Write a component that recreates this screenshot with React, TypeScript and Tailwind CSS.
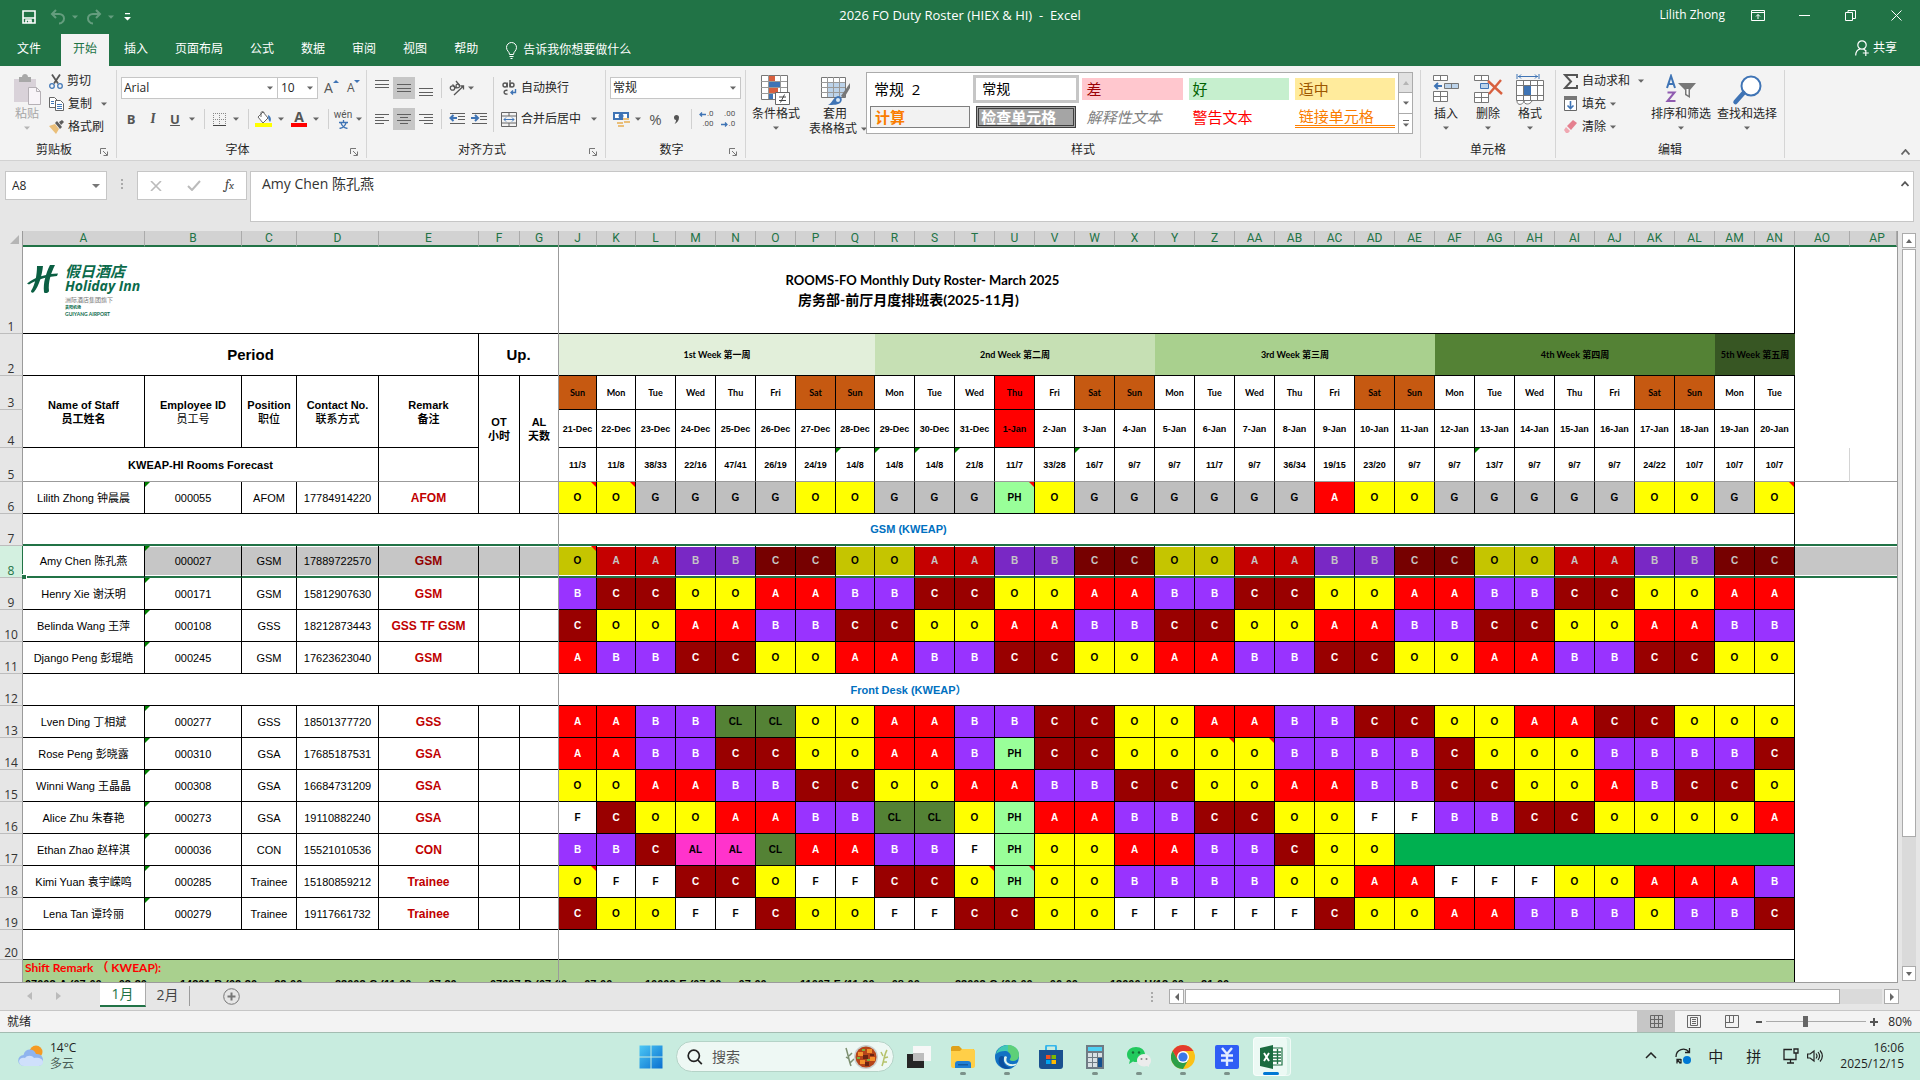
import type { ReactNode } from 'react'

type Staff = {
  row: number
  name: string
  id: string
  position: string
  phone: string
  remark: string
  shifts: string
  notes?: number[]
}

const menuTabs = ['文件', '开始', '插入', '页面布局', '公式', '数据', '审阅', '视图', '帮助']

const leftCols = ['A', 'B', 'C', 'D', 'E', 'F', 'G']
const dayCols = [
  'J', 'K', 'L', 'M', 'N', 'O', 'P', 'Q', 'R', 'S', 'T', 'U', 'V', 'W', 'X', 'Y', 'Z',
  'AA', 'AB', 'AC', 'AD', 'AE', 'AF', 'AG', 'AH', 'AI', 'AJ', 'AK', 'AL', 'AM', 'AN',
]

const weekdays = ['Sun', 'Mon', 'Tue', 'Wed', 'Thu', 'Fri', 'Sat']
const days = dayCols.map((col, i) => ({
  col,
  weekday: weekdays[i % 7],
  date: i < 11 ? `${21 + i}-Dec` : `${i - 10}-Jan`,
  holiday: i === 11,
}))

const forecast = (
  '11/3 11/8 38/33 22/16 47/41 26/19 24/19 14/8 14/8 14/8 21/8 11/7 33/28 16/7 9/7 ' +
  '9/7 11/7 9/7 36/34 19/15 23/20 9/7 9/7 13/7 9/7 9/7 9/7 24/22 10/7 10/7 10/7'
).split(' ')
const forecastFlags = [7, 8, 9, 10, 13, 23]

const weeks = [
  { label: '1st Week 第一周', span: 8, color: 'bg-[#e2efda]' },
  { label: '2nd Week 第二周', span: 7, color: 'bg-[#c6e0b4]' },
  { label: '3rd Week 第三周', span: 7, color: 'bg-[#a9d08e]' },
  { label: '4th Week 第四周', span: 7, color: 'bg-[#548235]' },
  { label: '5th Week 第五周', span: 2, color: 'bg-[#375623]' },
]

const manager: Staff[] = [
  { row: 6, name: 'Lilith Zhong 钟晨晨', id: '000055', position: 'AFOM', phone: '17784914220', remark: 'AFOM', shifts: 'O O G G G G O O G G G PH O G G G G G G A O O G G G G G O O G O', notes: [0, 1, 11, 30] },
]

const gsm: Staff[] = [
  { row: 8, name: 'Amy Chen 陈孔燕', id: '000027', position: 'GSM', phone: '17889722570', remark: 'GSM', shifts: 'O A A B B C C O O A A B B C C O O A A B B C C O O A A B B C C', notes: [0] },
  { row: 9, name: 'Henry Xie 谢沃明', id: '000171', position: 'GSM', phone: '15812907630', remark: 'GSM', shifts: 'B C C O O A A B B C C O O A A B B C C O O A A B B C C O O A A' },
  { row: 10, name: 'Belinda Wang 王萍', id: '000108', position: 'GSS', phone: '18212873443', remark: 'GSS TF GSM', shifts: 'C O O A A B B C C O O A A B B C C O O A A B B C C O O A A B B' },
  { row: 11, name: 'Django Peng 彭琨皓', id: '000245', position: 'GSM', phone: '17623623040', remark: 'GSM', shifts: 'A B B C C O O A A B B C C O O A A B B C C O O A A B B C C O O' },
]

const frontDesk: Staff[] = [
  { row: 13, name: 'Lven Ding 丁相斌', id: '000277', position: 'GSS', phone: '18501377720', remark: 'GSS', shifts: 'A A B B CL CL O O A A B B C C O O A A B B C C O O A A C C O O O' },
  { row: 14, name: 'Rose Peng 彭晓露', id: '000310', position: 'GSA', phone: '17685187531', remark: 'GSA', shifts: 'A A B B C C O O A A B PH C C O O O O B B B B C O O O B B B B C', notes: [16, 17] },
  { row: 15, name: 'Winni Wang 王晶晶', id: '000308', position: 'GSA', phone: '16684731209', remark: 'GSA', shifts: 'O O A A B B C C O O A A B B C C O O A A B B C C O O A B C C O' },
  { row: 16, name: 'Alice Zhu 朱春艳', id: '000273', position: 'GSA', phone: '19110882240', remark: 'GSA', shifts: 'F C O O A A B B CL CL O PH A A B B C C O O F F B B C C O O O O A' },
  { row: 17, name: 'Ethan Zhao 赵梓淇', id: '000036', position: 'CON', phone: '15521010536', remark: 'CON', shifts: 'B B C AL AL CL A A B B F PH O O A A B B C O O' },
  { row: 18, name: 'Kimi Yuan 袁宇嵘鸣', id: '000285', position: 'Trainee', phone: '15180859212', remark: 'Trainee', shifts: 'O F F C C O F F C C O PH O O B B B B O O A A F F F O O A A A B', notes: [0, 10, 11] },
  { row: 19, name: 'Lena Tan 谭玲丽', id: '000279', position: 'Trainee', phone: '19117661732', remark: 'Trainee', shifts: 'C O O F F C O O F F C C O O F F F F F C O O A A B B B O B B C' },
]

const shiftCodes = [
  '07003-A (07:00 — 03:30 、', '14301-B (02:30 — 22:00 、', '23003-C (11:00 — 07:30 、', '07007-D (07:00 — 07:00 、',
  '10003-E (07:00 — 07:00 、', '11007-F (11:00 — 08:00 、', '23003-G (00:00 — 06:00 、', '13000-H(13:00 — 21:00 、',
]

const shiftStyle: Record<string, string> = {
  O: 'bg-[#ffff00] text-black',
  A: 'bg-[#ff0000] text-white',
  B: 'bg-[#9933ff] text-white',
  C: 'bg-[#990000] text-white',
  G: 'bg-[#bfbfbf] text-black',
  F: 'bg-white text-black',
  PH: 'bg-[#99ff99] text-black',
  CL: 'bg-[#548235] text-black',
  AL: 'bg-[#ff33cc] text-black',
}

const selectedStyle: Record<string, string> = {
  O: 'bg-[#c5c500] text-black',
  A: 'bg-[#c50000] text-[#c5c5c5]',
  B: 'bg-[#7928c5] text-[#c5c5c5]',
  C: 'bg-[#760000] text-[#c5c5c5]',
}

/* ---------- small drawing helpers ---------- */

function Caret({ className = 'text-[#666666]' }: { className?: string }) {
  return (
    <svg className={`h-[4px] w-[6px] shrink-0 ${className}`} viewBox="0 0 6 4" fill="currentColor">
      <path d="M0 .5h6L3 3.7z" />
    </svg>
  )
}

function Launcher() {
  return (
    <svg className="h-2 w-2" viewBox="0 0 8 8" fill="none" stroke="#777">
      <path d="M.5 6V.5H6M3 3l4 4M7.5 3.5v4h-4" />
    </svg>
  )
}

function Lines({ rows, className = '' }: { rows: [number, number, number][]; className?: string }) {
  return (
    <svg className={`h-4 w-4 ${className}`} viewBox="0 0 16 16" stroke="#5f5f5f">
      {rows.map(([x1, x2, y]) => (
        <path key={y} d={`M${x1} ${y}.5H${x2}`} />
      ))}
    </svg>
  )
}

function Divider() {
  return <div className="h-5 w-px bg-[#d0d0d0]" />
}

function Group({ label, width, launcher, children }: { label: string; width: string; launcher?: boolean; children: ReactNode }) {
  return (
    <section className={`flex h-[88px] shrink-0 flex-col border-r border-[#d5d5d5] ${width}`}>
      <div className="h-[72px]">{children}</div>
      <div className="flex h-4 items-center px-2">
        <span className="flex-1 text-center">{label}</span>
        {launcher && (
          <button aria-label={`${label}设置`} className="self-end pb-[2px]">
            <Launcher />
          </button>
        )}
      </div>
    </section>
  )
}

function BigButton({ label, width, children }: { label: string; width: string; children: ReactNode }) {
  return (
    <button className={`flex flex-col items-center pt-1 ${width}`}>
      <span className="h-8">{children}</span>
      <span className="h-4 whitespace-nowrap leading-4">{label}</span>
      <span className="flex h-3 items-center">
        <Caret />
      </span>
    </button>
  )
}

function Corner({ kind }: { kind: 'error' | 'note' }) {
  return kind === 'error' ? (
    <i className="absolute left-0 top-0 h-0 w-0 border-r-[5px] border-t-[5px] border-r-transparent border-t-[#008000]" />
  ) : (
    <i className="absolute right-0 top-0 h-0 w-0 border-l-[5px] border-t-[5px] border-l-transparent border-t-[#ff0000]" />
  )
}

/* ---------- title bar and menu ---------- */

function TitleBar() {
  return (
    <header className="shrink-0 bg-[#217346] text-white">
      <div className="grid h-[34px] grid-cols-[1fr_auto_1fr] items-center">
        <div className="flex items-center pl-[22px]">
          <button aria-label="保存">
            <svg className="h-[14px] w-[14px]" viewBox="0 0 14 14" fill="none" stroke="white" strokeWidth="1.6">
              <path d="M1 1h12v12H1zM1 8h12M4 13v-3h5v3M7 10v3" />
            </svg>
          </button>
          <button aria-label="撤消" className="ml-[14px] flex items-center gap-[6px] opacity-30">
            <svg className="h-4 w-4" viewBox="0 0 16 16" fill="none" stroke="white" strokeWidth="2">
              <path d="M6 1 2 5l4 4M2 5h7c3 0 5 2 5 4.500s-2 5-5 5" />
            </svg>
            <Caret className="text-white" />
          </button>
          <button aria-label="恢复" className="ml-[8px] flex items-center gap-[6px] opacity-30">
            <svg className="h-4 w-4" viewBox="0 0 16 16" fill="none" stroke="white" strokeWidth="2">
              <path d="m10 1 4 4-4 4M14 5H7c-3 0-5 2-5 4.500s2 5 5 5" />
            </svg>
            <Caret className="text-white" />
          </button>
          <button aria-label="自定义快速访问工具栏" className="ml-[10px]">
            <svg className="h-2 w-[7px]" viewBox="0 0 7 8" fill="white">
              <path d="M1 0h5v1.200H1zM0 4h7L3.500 7.500z" />
            </svg>
          </button>
        </div>
        <h1 className="whitespace-pre pb-1 text-[13px]">2026 FO Duty Roster (HIEX &amp; HI)  -  Excel</h1>
        <div className="flex items-center justify-end pb-1 pr-[18px]">
          <span className="mr-[26px]">Lilith Zhong</span>
          <button aria-label="功能区显示选项" className="mr-[34px]">
            <svg className="h-3 w-[14px]" viewBox="0 0 14 12" fill="none" stroke="white">
              <path d="M.5 1.500h13v10H.5zM.5 3.500h13M7 10V5.500M5 7.500l2-2 2 2" />
            </svg>
          </button>
          <button aria-label="最小化" className="mr-[35px]">
            <svg className="h-[11px] w-[11px]" viewBox="0 0 11 11" stroke="white">
              <path d="M0 5.500h11" />
            </svg>
          </button>
          <button aria-label="还原" className="mr-[35px]">
            <svg className="h-[11px] w-[11px]" viewBox="0 0 11 11" fill="none" stroke="white">
              <path d="M.5 2.500h7v8h-7zM3 2.500V.5h7.500v8h-3" />
            </svg>
          </button>
          <button aria-label="关闭">
            <svg className="h-[11px] w-[11px]" viewBox="0 0 11 11" stroke="white">
              <path d="m.5.5 10 10M10.500.5l-10 10" />
            </svg>
          </button>
        </div>
      </div>

      <div className="flex h-8 items-stretch">
        <nav className="flex gap-[3px] pl-[5px]">
          {menuTabs.map((tab, i) => (
            <button
              key={tab}
              className={`px-3 pb-[2px] ${i === 0 ? 'mr-[5px]' : ''} ${i === 1 ? 'bg-[#f3f3f3] text-[#217346]' : ''}`}
            >
              {tab}
            </button>
          ))}
        </nav>
        <button className="ml-[16px] flex items-center gap-[6px]">
          <svg className="h-[17px] w-[11px]" viewBox="0 0 11 17" fill="none" stroke="white">
            <path d="M3.500 12.500c0-3-3-3.500-3-7a5 5 0 0 1 10 0c0 3.500-3 4-3 7zM3.500 14.500h4M4.500 16.500h2" />
          </svg>
          告诉我你想要做什么
        </button>
        <button className="ml-auto mr-[23px] flex items-center gap-1 pb-[4px]">
          <svg className="h-4 w-[14px]" viewBox="0 0 14 16" fill="none" stroke="white" strokeWidth="1.200">
            <circle cx="7" cy="5" r="4.200" />
            <path d="M.7 15.500c0-4 2-6 4.500-6.500M8.500 9l2 1.500M10.800 10v6M7.800 13h6" />
          </svg>
          共享
        </button>
      </div>
    </header>
  )
}

/* ---------- ribbon ---------- */

function ClipboardGroup() {
  return (
    <Group label="剪贴板" width="w-[117px]" launcher>
      <div className="flex">
        <button className="ml-[9px] flex w-9 flex-col items-center pt-1 text-[#a6a6a6]">
          <svg className="h-8 w-8" viewBox="0 0 32 32">
            <path d="M3 5h22v23H3z" fill="#d9d2d9" />
            <path d="M8 8V3h3c0-4 6-4 6 0h3v5z" fill="#a8a8a8" />
            <path d="M17.500 13.500h8l4 4v13h-12z" fill="#f8f4f8" stroke="#b5b0b5" />
            <path d="M25.500 13.500v4h4" fill="none" stroke="#b5b0b5" />
          </svg>
          <span className="leading-4">粘贴</span>
          <span className="flex h-3 items-center">
            <Caret className="text-[#b5b5b5]" />
          </span>
        </button>
        <div className="flex flex-col pl-[4px]">
          <button className="flex h-[22px] items-center gap-[4px]">
            <svg className="h-[15px] w-[14px]" viewBox="0 0 14 15" fill="none">
              <path d="m3 .5 6 9M11 .5l-6 9" stroke="#555" strokeWidth="1.800" />
              <circle cx="3" cy="12" r="2.300" stroke="#4379b8" strokeWidth="1.300" />
              <circle cx="11" cy="12" r="2.300" stroke="#4379b8" strokeWidth="1.300" />
            </svg>
            剪切
          </button>
          <button className="flex h-[23px] items-center gap-[4px]">
            <svg className="h-[14px] w-[15px]" viewBox="0 0 15 14" fill="white" stroke="#666">
              <path d="M.5.5h5l3 3v7h-8z" />
              <path d="M6.500 3.500h5l3 3v7h-8z" />
              <path d="M2 4.500h3M2 6.500h3M8 7.500h5M8 9.500h5M8 11.500h5" stroke="#4379b8" />
            </svg>
            复制
            <span className="ml-[5px]">
              <Caret />
            </span>
          </button>
          <button className="flex h-[23px] items-center gap-[4px]">
            <svg className="h-[14px] w-[15px]" viewBox="0 0 15 14">
              <path d="m0 6 6-2 4 5-3 5z" fill="#eabf7a" />
              <path d="m6 3 2-2 5 6-2 2zM10 2l3-2 2 2-3 3z" fill="#5d5d5d" />
            </svg>
            格式刷
          </button>
        </div>
      </div>
    </Group>
  )
}

function FontGroup() {
  return (
    <Group label="字体" width="w-[250px]" launcher>
      <div className="flex items-center pl-[4px] pt-[7px]">
        <label className="flex h-[22px] w-[157px] items-center border border-[#c6c6c6] bg-white pr-1">
          <select aria-label="字体" className="h-full flex-1 appearance-none pl-[2px] outline-none">
            <option>Arial</option>
          </select>
          <Caret />
        </label>
        <label className="flex h-[22px] w-[40px] items-center border border-l-0 border-[#c6c6c6] bg-white pr-1">
          <select aria-label="字号" className="h-full w-5 flex-1 appearance-none pl-[3px] outline-none">
            <option>10</option>
          </select>
          <Caret />
        </label>
        <button aria-label="增大字号" className="relative ml-[6px] h-5 w-[15px] text-left text-[14px] leading-5 text-[#555555]">
          A<i className="absolute right-0 top-[2px] border-x-[3px] border-b-[3px] border-x-transparent border-b-[#3f74b5]" />
        </button>
        <button aria-label="减小字号" className="relative ml-[8px] h-5 w-[13px] text-left text-[12px] leading-5 text-[#555555]">
          A<i className="absolute right-0 top-[2px] border-x-[3px] border-t-[3px] border-x-transparent border-t-[#3f74b5]" />
        </button>
      </div>
      <div className="flex h-10 items-center pl-[8px] text-[#555555]">
        <button className="w-[12px] text-[13px] font-bold">B</button>
        <button className="ml-[10px] w-[12px] font-serif text-[14px] font-bold italic">I</button>
        <button className="ml-[10px] w-[12px] text-[13px] font-bold underline">U</button>
        <span className="ml-[8px] mr-[9px]"><Caret /></span>
        <Divider />
        <button aria-label="边框" className="ml-[8px] mr-[7px]">
          <svg className="h-[13px] w-[13px]" viewBox="0 0 13 13" fill="none" stroke="#888" strokeDasharray="1 1">
            <path d="M0 .5h13M0 6.500h13M.5 0v12M6.500 0v12M12.500 0v12" />
            <path d="M0 12.500h13" stroke="#444" strokeDasharray="none" />
          </svg>
        </button>
        <Caret />
        <span className="w-[9px]" />
        <Divider />
        <button aria-label="填充颜色" className="ml-[6px] mr-[6px]">
          <svg className="h-4 w-[17px]" viewBox="0 0 17 16">
            <path d="m3 6 5-5 5 6-5 5z" fill="#fff" stroke="#666" />
            <path d="M6 6V2c0-2 3-2 3 0" fill="none" stroke="#666" />
            <path d="M13 4c4 2 3 6 2 7-1-1-2-3-2-7" fill="#4379b8" />
            <path d="M0 12h17v4H0z" fill="#ffff00" />
          </svg>
        </button>
        <Caret />
        <button aria-label="字体颜色" className="ml-[7px] mr-[6px] flex h-4 w-4 flex-col items-center justify-between">
          <span className="text-[14px] font-bold leading-[12px]">A</span>
          <span className="h-1 w-4 shrink-0 bg-[#ff0000]" />
        </button>
        <Caret />
        <span className="w-[9px]" />
        <Divider />
        <button aria-label="拼音" className="ml-[6px] mr-[5px] flex w-4 flex-col items-center font-['Roboto','Noto_Sans_CJK_SC',sans-serif] text-[10px] leading-[11px]">
          <span>wén</span>
          <svg className="h-[9px] w-[9px]" viewBox="0 0 9 9" fill="none" stroke="#3f74b5" strokeWidth="1.300">
            <path d="M4.500 0v2M0 2.500h9M2 3c1 3 3 5 6.500 5.500M7 3c-1 3-3 5-6.500 5.500" />
          </svg>
        </button>
        <Caret />
      </div>
    </Group>
  )
}

function AlignGroup() {
  return (
    <Group label="对齐方式" width="w-[239px]" launcher>
      <div className="flex">
        <div className="pl-[4px] pt-[7px]">
          <div className="flex h-[22px] items-center">
            <button aria-label="顶端对齐" className="flex h-[22px] w-[22px] items-center justify-center"><Lines rows={[[1, 15, 0], [1, 15, 4], [1, 15, 7]]} /></button>
            <button aria-label="垂直居中" className="flex h-[22px] w-[22px] items-center justify-center bg-[#c6c6c6]"><Lines rows={[[1, 15, 4], [1, 15, 8], [1, 15, 11]]} /></button>
            <button aria-label="底端对齐" className="flex h-[22px] w-[22px] items-center justify-center"><Lines rows={[[1, 15, 8], [1, 15, 12], [1, 15, 15]]} /></button>
            <span className="mx-[4px]"><Divider /></span>
            <button aria-label="方向" className="mx-[3px]">
              <svg className="h-4 w-4" viewBox="0 0 16 16" fill="none" stroke="#555" strokeWidth="1.300">
                <circle cx="3.500" cy="8" r="2.200" />
                <path d="m3.500 4.500 4 4M7 1l4 5" />
                <circle cx="8.800" cy="6" r="1.800" />
                <path d="M5 15 14.500 6M11.500 6h3v3.500" />
              </svg>
            </button>
            <Caret />
          </div>
          <div className="mt-[9px] flex h-[22px] items-center">
            <button aria-label="左对齐" className="flex h-[22px] w-[22px] items-center justify-center"><Lines rows={[[1, 15, 3], [1, 10, 6], [1, 15, 9], [1, 10, 12]]} /></button>
            <button aria-label="居中" className="flex h-[22px] w-[22px] items-center justify-center bg-[#c6c6c6]"><Lines rows={[[1, 15, 3], [4, 12, 6], [1, 15, 9], [4, 12, 12]]} /></button>
            <button aria-label="右对齐" className="flex h-[22px] w-[22px] items-center justify-center"><Lines rows={[[1, 15, 3], [6, 15, 6], [1, 15, 9], [6, 15, 12]]} /></button>
            <span className="mx-[4px]"><Divider /></span>
            <button aria-label="减少缩进量" className="ml-[3px]">
              <svg className="h-4 w-4" viewBox="0 0 16 16" stroke="#5f5f5f" fill="none">
                <path d="M1 2.500h15M9 5.500h7M9 8.500h7M1 12.500h15" />
                <path d="M8 7H1.500M4.500 4l-3 3 3 3" stroke="#3f74b5" strokeWidth="2" />
              </svg>
            </button>
            <button aria-label="增加缩进量" className="ml-[6px]">
              <svg className="h-4 w-4" viewBox="0 0 16 16" stroke="#5f5f5f" fill="none">
                <path d="M1 2.500h15M9 5.500h7M9 8.500h7M1 12.500h15" />
                <path d="M0 7h6.500M4 4l3 3-3 3" stroke="#3f74b5" strokeWidth="2" />
              </svg>
            </button>
          </div>
        </div>
        <div className="ml-[6px] mt-[7px] h-[55px] w-px bg-[#d0d0d0]" />
        <div className="pl-[7px] pt-[7px]">
          <button className="flex h-[22px] items-center gap-1">
            <svg className="h-4 w-4" viewBox="0 0 16 16" fill="none" stroke="#555" strokeWidth="1.400">
              <circle cx="4" cy="5" r="2" />
              <path d="M6.200 2.500v5M9 0v7.500" />
              <circle cx="11" cy="5" r="2" />
              <path d="M6.500 10.500c-4-1.500-5 4.500 0 3.500" />
              <path d="M14.500 9v3.500H10M12 10.500l-2 2 2 2" stroke="#3f74b5" />
            </svg>
            自动换行
          </button>
          <button className="mt-[9px] flex h-[22px] items-center gap-1">
            <svg className="h-[15px] w-4" viewBox="0 0 16 15" fill="none" stroke="#666">
              <path d="M.5.5h15v14H.5zM.5 4h15M.5 11h15M8 0v4M8 11v4" />
              <path d="M3 7.500h10M5 5.500l-2 2 2 2M11 5.500l2 2-2 2" stroke="#3f74b5" />
            </svg>
            合并后居中
            <span className="ml-[6px]"><Caret /></span>
          </button>
        </div>
      </div>
    </Group>
  )
}

function NumberGroup() {
  return (
    <Group label="数字" width="w-[140px]" launcher>
      <div className="px-[4px] pt-[7px]">
        <label className="flex h-[22px] items-center border border-[#c6c6c6] bg-white pr-1">
          <select aria-label="数字格式" className="h-full flex-1 appearance-none pl-[2px] outline-none">
            <option>常规</option>
          </select>
          <Caret />
        </label>
      </div>
      <div className="flex h-10 items-center pl-[7px] text-[#555555]">
        <button aria-label="会计数字格式" className="mr-[5px]">
          <svg className="h-4 w-[17px]" viewBox="0 0 17 16">
            <path d="M0 1h16v8H0z" fill="#3f74b5" />
            <path d="M2 3h12v4H2z" fill="#fff" />
            <circle cx="8" cy="5" r="2.500" fill="#3f74b5" />
            <path d="M10 7h6v2h-6zM11 10h6v2h-6zM4 11h6v2H4zM5 14h6v2H5z" fill="#eabf7a" />
          </svg>
        </button>
        <Caret />
        <button className="ml-[8px] w-[13px] text-[15px]">%</button>
        <button aria-label="千位分隔样式" className="ml-[12px]">
          <svg className="h-[9px] w-[5px]" viewBox="0 0 5 9" fill="#555">
            <path d="M0 2.500a2.400 2.400 0 0 1 5 0C5 5.500 3 8 .5 9c1-1.500 1.500-2.500 1.500-4A2.400 2.400 0 0 1 0 2.500" />
          </svg>
        </button>
        <span className="ml-[12px] mr-[7px]"><Divider /></span>
        <button aria-label="增加小数位数" className="flex flex-col items-end font-['Roboto',sans-serif] text-[8px] leading-[10px]">
          <span className="flex items-center gap-[1px]">
            <svg className="h-[5px] w-[7px]" viewBox="0 0 7 5" fill="none" stroke="#3f74b5" strokeWidth="1.300"><path d="M7 2.500H1M3 .5l-2 2 2 2" /></svg>
            .0
          </span>
          <span>.00</span>
        </button>
        <button aria-label="减少小数位数" className="ml-[7px] flex flex-col items-end font-['Roboto',sans-serif] text-[8px] leading-[10px]">
          <span>.00</span>
          <span className="flex items-center gap-[1px]">
            <svg className="h-[5px] w-[7px]" viewBox="0 0 7 5" fill="none" stroke="#3f74b5" strokeWidth="1.300"><path d="M0 2.500h6M4 .5l2 2-2 2" /></svg>
            .0
          </span>
        </button>
      </div>
    </Group>
  )
}

function StylesGroup() {
  return (
    <Group label="样式" width="w-[675px]">
      <div className="flex">
        <BigButton label="条件格式" width="w-[60px]">
          <svg className="h-8 w-8" viewBox="0 0 32 32">
            <path d="M1.500 1.500h26v24h-26z" fill="#fff" stroke="#777" />
            <path d="M8.500 1v24M20.500 1v24M1 7.500h26M1 13.500h26M1 19.500h26" stroke="#999" />
            <path d="M9 2h6v5H9zM9 14h9v5H9z" fill="#d8603f" />
            <path d="M9 8h11v5H9zM9 20h4v5H9z" fill="#3f74b5" />
            <path d="M15.500 18.500h14v12h-14z" fill="#fff" stroke="#666" />
            <path d="M19 23h7M19 26.500h7M24.500 20.500l-4 8" stroke="#444" />
          </svg>
        </BigButton>
        <button className="flex w-[58px] flex-col items-center pt-1">
          <svg className="h-8 w-8" viewBox="0 0 32 32">
            <path d="M2.500 3.500h24v20h-24z" fill="#fff" stroke="#777" />
            <path d="M8 8h18v15H8z" fill="#bcd3ea" />
            <path d="M8.500 3v20M14.500 3v20M20.500 3v20M2 8.500h24M2 13.500h24M2 18.500h24" stroke="#999" />
            <path d="m31 9-9 13 3 2 6-10z" fill="#777" />
            <path d="M9 31c4-1 5-8 10-9 3 0 5 3 3 6-2 3-8 3-13 3" fill="#3f74b5" />
            <circle cx="19" cy="26" r="2" fill="#dbe8f5" />
          </svg>
          <span className="h-4 leading-4">套用</span>
          <span className="flex items-center gap-1 whitespace-nowrap pl-[6px] leading-[14px]">
            表格格式 <Caret />
          </span>
        </button>
        <div className="ml-[2px] mt-[2px] flex h-[62px] w-[547px] border border-[#ababab] bg-white">
          <div className="grid flex-1 grid-cols-5 grid-rows-2 gap-x-[6px] gap-y-[6px] px-[3px] py-[5px] text-[15px]">
            <button className="pl-1 text-left text-black">常规&nbsp; 2</button>
            <button className="pl-[6px] text-left text-[14px] text-black outline-3 outline-[#c6c6c6]">常规</button>
            <button className="bg-[#ffc7ce] pl-1 text-left text-[#9c0006]">差</button>
            <button className="bg-[#c6efce] pl-1 text-left text-[#006100]">好</button>
            <button className="bg-[#ffeb9c] pl-1 text-left text-[#9c5700]">适中</button>
            <button className="border border-[#7f7f7f] bg-[#f2f2f2] pl-1 text-left font-bold leading-4 text-[#fa7d00]">计算</button>
            <button className="border-3 border-double border-[#3f3f3f] bg-[#a5a5a5] pl-[2px] text-left font-bold leading-4 text-white">检查单元格</button>
            <button className="pl-1 text-left italic text-[#7f7f7f]">解释性文本</button>
            <button className="pl-1 text-left text-[#ff0000]">警告文本</button>
            <button className="border-b-3 border-double border-[#ff8001] pl-1 text-left leading-4 text-[#fa7d00]">链接单元格</button>
          </div>
          <div className="flex w-[14px] flex-col border-l border-[#ababab]">
            <button aria-label="上一行" className="flex flex-1 items-center justify-center bg-[#e1e1e1]">
              <i className="border-x-[3px] border-b-[4px] border-x-transparent border-b-[#b5b5b5]" />
            </button>
            <button aria-label="下一行" className="flex flex-1 items-center justify-center border-y border-[#ababab]"><Caret /></button>
            <button aria-label="其他" className="flex flex-1 flex-col items-center justify-center gap-[2px]">
              <span className="h-px w-[6px] bg-[#666666]" />
              <Caret />
            </button>
          </div>
        </div>
      </div>
    </Group>
  )
}

function CellsGroup() {
  return (
    <Group label="单元格" width="w-[135px]">
      <div className="flex pl-[4px]">
        <BigButton label="插入" width="w-[42px]">
          <svg className="h-8 w-[28px]" viewBox="0 0 28 32" fill="#fff" stroke="#777">
            <path d="M1.500 1.500h14v5h-14zM8.500 1.500v5M1.500 17.500h14v10h-14zM8.500 17.500v10M1.500 22.500h14" />
            <path d="M12.500 9.500h14v5h-14zM19.500 9.500v5" fill="#bcd3ea" />
            <path d="M10 12H3M6 9l-3 3 3 3" fill="none" stroke="#3f74b5" strokeWidth="2" />
          </svg>
        </BigButton>
        <BigButton label="删除" width="w-[42px]">
          <svg className="h-8 w-[30px]" viewBox="0 0 30 32" fill="#fff" stroke="#777">
            <path d="M1.500 1.500h14v5h-14zM8.500 1.500v5M1.500 18.500h14v10h-14zM8.500 18.500v10M1.500 23.500h14" />
            <path d="M7.500 9.500h8v5h-8z" fill="#bcd3ea" stroke="#3f74b5" />
            <path d="m15 7 14 13M28 6 16 20" stroke="#d8603f" strokeWidth="2.400" />
          </svg>
        </BigButton>
        <BigButton label="格式" width="w-[42px]">
          <svg className="h-8 w-[28px]" viewBox="0 0 28 32" fill="#fff" stroke="#777">
            <path d="M.5 6.500h27v20H.5zM7.500 6v20M14.500 6v20M21.500 6v20M0 11.500h28M0 21.500h28" />
            <path d="M8 12h7v9H8z" fill="#3f74b5" stroke="none" />
            <path d="M1 0v5M23 0v5M2 2.500h20M5 .5l-2 2 2 2M19 .5l2 2-2 2" fill="none" stroke="#3f74b5" />
            <path d="M1 27c0 5 6 4 7 0 0 4 6 4 8 0" />
          </svg>
        </BigButton>
      </div>
    </Group>
  )
}

function EditGroup() {
  return (
    <Group label="编辑" width="w-[229px]">
      <div className="flex">
        <div className="flex w-[92px] shrink-0 flex-col pl-[7px]">
          <button className="flex h-[22px] items-center gap-[4px]">
            <svg className="h-[15px] w-[15px] shrink-0" viewBox="0 0 15 15" fill="none" stroke="#555" strokeWidth="2">
              <path d="M14 4V1H2l6 6.500L2 14h12v-3" />
            </svg>
            <span className="whitespace-nowrap">自动求和</span>
            <span className="ml-[4px]"><Caret /></span>
          </button>
          <button className="flex h-[23px] items-center gap-[4px]">
            <svg className="h-[15px] w-[15px]" viewBox="0 0 15 15" fill="#fff" stroke="#666">
              <path d="M1.500.5h12v14h-12z" />
              <path d="M1 0h13v4H1z" fill="#777" stroke="none" />
              <path d="M7.500 5v7M4.500 9.500l3 3 3-3" stroke="#3f74b5" strokeWidth="1.600" fill="none" />
            </svg>
            填充
            <Caret />
          </button>
          <button className="flex h-[23px] items-center gap-[4px]">
            <svg className="h-[14px] w-[15px]" viewBox="0 0 15 14">
              <path d="m4 6 6-6 4 3-6 7z" fill="#e5808f" />
              <path d="m3 7 4 4-2 2H3L1 10z" fill="#f0a8b2" />
            </svg>
            清除
            <Caret />
          </button>
        </div>
        <BigButton label="排序和筛选" width="w-[66px]">
          <svg className="h-8 w-8" viewBox="0 0 32 32" fill="none">
            <path d="m2 14 4-12 4 12M3.500 10h5" stroke="#3f74b5" strokeWidth="2" />
            <path d="M2.500 18.500h7L2.500 27h8" stroke="#8f5bb0" strokeWidth="2" />
            <path d="M13 9h18l-6 7v8l-5-3v-5z" fill="#777" />
            <path d="M21.500 15v5l2 1.500V15z" fill="#fff" />
          </svg>
        </BigButton>
        <BigButton label="查找和选择" width="w-[66px]">
          <svg className="h-8 w-8" viewBox="0 0 32 32" fill="none">
            <circle cx="20" cy="12" r="9.500" fill="#fff" stroke="#3f74b5" strokeWidth="2" />
            <path d="m12.500 19-8 9" stroke="#3f74b5" strokeWidth="4.500" strokeLinecap="round" />
          </svg>
        </BigButton>
      </div>
    </Group>
  )
}

function Ribbon() {
  return (
    <div className="flex h-[95px] shrink-0 border-b border-[#d2d2d2] bg-[#f3f3f3] pt-1">
      <ClipboardGroup />
      <FontGroup />
      <AlignGroup />
      <NumberGroup />
      <StylesGroup />
      <CellsGroup />
      <EditGroup />
      <button aria-label="折叠功能区" className="mb-[5px] ml-auto mr-[10px] self-end">
        <svg className="h-[6px] w-[9px]" viewBox="0 0 9 6" fill="none" stroke="#666" strokeWidth="1.800">
          <path d="M.5 5.500 4.500 1l4 4.500" />
        </svg>
      </button>
    </div>
  )
}

function FormulaBar() {
  return (
    <div className="flex h-[70px] shrink-0 items-start pl-[5px] pr-[6px] pt-[10px]">
      <label className="flex h-[29px] w-[102px] items-center border border-[#c6c6c6] bg-white pr-[6px]">
        <input aria-label="名称框" defaultValue="A8" className="w-full pl-[6px] outline-none" />
        <svg className="h-1 w-2 shrink-0" viewBox="0 0 8 4" fill="#777"><path d="M0 0h8L4 4z" /></svg>
      </label>
      <svg className="mx-[13px] mt-2 h-3 w-1" viewBox="0 0 4 12" fill="#aaa">
        <path d="M1 0h2v2H1zM1 4h2v2H1zM1 8h2v2H1z" />
      </svg>
      <div className="flex h-[29px] w-[110px] items-center justify-between border border-[#c6c6c6] bg-white px-3">
        <button aria-label="取消">
          <svg className="h-[10px] w-3" viewBox="0 0 12 10" stroke="#bbb" strokeWidth="1.600"><path d="m1 0 10 10M11 0 1 10" /></svg>
        </button>
        <button aria-label="输入">
          <svg className="h-[11px] w-[14px]" viewBox="0 0 14 11" fill="none" stroke="#bbb" strokeWidth="2"><path d="m1 6 4 4 8-9" /></svg>
        </button>
        <button aria-label="插入函数" className="font-serif text-[14px] italic text-[#444444]">
          f<span className="text-[11px]">x</span>
        </button>
      </div>
      <div className="ml-[3px] flex h-[51px] flex-1 items-start border border-[#c6c6c6] bg-white">
        <textarea
          aria-label="编辑栏"
          defaultValue="Amy Chen 陈孔燕"
          className="h-full flex-1 resize-none pl-[11px] pt-[2px] text-[14px] leading-5 text-[#333333] outline-none"
        />
        <svg className="mr-1 mt-[9px] h-[6px] w-[8px]" viewBox="0 0 8 6" fill="none" stroke="#555" strokeWidth="1.800">
          <path d="M.5 5 4 1.200 7.500 5" />
        </svg>
      </div>
    </div>
  )
}

/* ---------- sheet ---------- */

function RowHead({ n, selected }: { n?: number; selected?: boolean }) {
  return (
    <th
      scope="row"
      className={`border-b border-r border-b-[#bdbdbd] p-0 align-bottom font-['Open_Sans','Noto_Sans_CJK_SC',sans-serif] text-[12px] font-normal leading-3 ${
        selected ? 'border-r-[#217346] bg-[#d3f0e0] text-[#217346]' : 'border-r-[#9b9b9b] bg-[#e6e6e6] text-[#333333]'
      }`}
    >
      {n}
    </th>
  )
}

function StaffRow({ staff }: { staff: Staff }) {
  const selected = staff.row === 8
  const codes = staff.shifts.split(' ')
  const edge = selected
    ? 'border-b-2 border-b-[#217346] shadow-[inset_0_1px_0_white,inset_0_-1px_0_white]'
    : 'border-b border-b-black'
  const base = `relative border-r border-r-black p-0 ${edge}`
  const plain = `${base} ${selected ? 'bg-[#c6c6c6]' : ''}`
  const colors = selected ? selectedStyle : shiftStyle

  return (
    <tr className="h-8">
      <RowHead n={staff.row} selected={selected} />
      <td className={`${base} whitespace-nowrap`}>
        {staff.name}
        {selected && <i className="absolute bottom-[-3px] left-[-1px] h-[5px] w-[5px] border-r border-t border-white bg-[#217346]" />}
      </td>
      <td className={plain}>
        <Corner kind="error" />
        {staff.id}
      </td>
      <td className={plain}>{staff.position}</td>
      <td className={plain}>{staff.phone}</td>
      <td className={`${plain} whitespace-nowrap text-[12px] font-bold ${selected ? 'text-[#930000]' : 'text-[#c00000]'}`}>{staff.remark}</td>
      <td className={plain} />
      <td className={plain} />
      {codes.map((code, i) => (
        <td key={i} className={`${base} text-[10px] font-bold ${colors[code]}`}>
          {staff.notes?.includes(i) && <Corner kind="note" />}
          {code}
        </td>
      ))}
      {codes.length < dayCols.length && <td colSpan={dayCols.length - codes.length} className={`${base} bg-[#00b050]`} />}
      <td colSpan={2} className={selected ? `${edge} bg-[#c6c6c6]` : ''} />
    </tr>
  )
}

function SectionRow({ n, title, height = 'h-8', beforeSelection }: { n: number; title?: string; height?: string; beforeSelection?: boolean }) {
  const edge = beforeSelection ? 'border-b-2 border-b-[#217346]' : 'border-b border-b-black'
  return (
    <tr className={height}>
      <RowHead n={n} />
      <td colSpan={38} className={`border-r border-r-black p-0 font-bold text-[#0070c0] ${edge}`}>{title}</td>
      <td colSpan={2} className={beforeSelection ? edge : ''} />
    </tr>
  )
}

function HotelLogo() {
  return (
    <div className="absolute left-[4px] top-[17px] flex gap-[7px] text-left text-[#0b6b4b]">
      <svg className="mt-[1px] h-[29px] w-[31px]" viewBox="0 0 31 29" fill="#0b5f43">
        <path d="M10 1h6c-1 9-4 20-9 26-1 1-3 1-3-1C8 20 10 10 10 1z" />
        <path d="M23 0h5c-4 8-7 17-6 26 0 2-5 3-5 1-1-9 2-19 6-27z" />
        <path d="M0 18.500C8 12 19 9 31 8.500l-1 2.500C19 12 10 14.500 2 19.500z" />
      </svg>
      <div className="whitespace-nowrap font-bold">
        <p className="text-[15px] italic leading-[14px]">假日酒店</p>
        <p className="font-['Open_Sans',sans-serif] text-[14px] italic leading-[16px]">Holiday Inn</p>
        <p className="mt-[2px] text-[6px] font-normal leading-[7px] text-[#777777]">洲际酒店集团旗下</p>
        <p className="mt-[2px] text-[4px] leading-[6px]">贵阳机场</p>
        <p className="text-[5px] leading-[6px]">GUIYANG AIRPORT</p>
      </div>
    </div>
  )
}

function Sheet() {
  const head = 'border-b border-r border-black p-0 font-bold leading-[14px]'
  return (
    <div className="relative flex-1 overflow-hidden border-b border-r border-[#9b9b9b] bg-white">
      <table className="w-full table-fixed border-separate border-spacing-0 text-center font-['Liberation_Sans','Noto_Sans_CJK_SC',sans-serif] text-[11px] leading-[14px] text-black">
        <colgroup>
          <col className="w-[23px]" />
          <col className="w-[122px]" />
          <col className="w-[97px]" />
          <col className="w-[55px]" />
          <col className="w-[82px]" />
          <col className="w-[100px]" />
          <col className="w-[41px]" />
          <col className="w-[39px]" />
          {dayCols.map(col => (
            <col key={col} className={col === 'J' ? 'w-[38px]' : col === 'K' || col === 'Q' ? 'w-[39px]' : 'w-[40px]'} />
          ))}
          <col className="w-[55px]" />
          <col />
        </colgroup>
        <thead>
          <tr className="h-4 font-['Roboto',sans-serif] text-[12px] text-[#217346]">
            <th className="border-r border-[#9b9b9b] bg-[#e6e6e6] p-0">
              <i className="ml-[10px] block h-0 w-0 border-b-[9px] border-l-[9px] border-b-[#b5b5b5] border-l-transparent" />
            </th>
            {[...leftCols, ...dayCols, 'AO', 'AP'].map(col => (
              <th
                key={col}
                scope="col"
                className={`border-b-2 border-r border-b-[#217346] border-r-[#ababab] bg-[#d2d2d2] p-0 font-normal leading-[14px] ${col === 'AP' ? 'pl-2' : ''}`}
              >
                {col}
              </th>
            ))}
          </tr>
        </thead>
        <tbody>
          <tr className="h-[87px]">
            <RowHead n={1} />
            <td colSpan={38} className="relative border-b border-r border-black p-0 font-['Lato','Noto_Sans_CJK_SC',sans-serif] text-[14px] font-bold leading-5">
              <HotelLogo />
              <p className="pl-7 text-[13px]">ROOMS-FO Monthly Duty Roster- March 2025</p>
              <p>房务部-前厅月度排班表(2025-11月)</p>
            </td>
            <td colSpan={2} />
          </tr>
          <tr className="h-[42px]">
            <RowHead n={2} />
            <td colSpan={5} className={`${head} text-[15px]`}>Period</td>
            <td colSpan={2} className={`${head} text-[15px]`}>Up.</td>
            {weeks.map(week => (
              <td key={week.label} colSpan={week.span} className={`whitespace-nowrap border-b border-black p-0 font-['Lato','Noto_Sans_CJK_SC',sans-serif] text-[9px] font-bold ${week.color}`}>
                {week.label}
              </td>
            ))}
            <td colSpan={2} />
          </tr>
          <tr className="h-[34px]">
            <RowHead n={3} />
            <td rowSpan={2} className={head}>Name of Staff<br />员工姓名</td>
            <td rowSpan={2} className={head}>Employee ID<br /><span className="font-normal">员工号</span></td>
            <td rowSpan={2} className={head}>Position<br /><span className="font-medium">职位</span></td>
            <td rowSpan={2} className={`${head} whitespace-nowrap`}>Contact No.<br /><span className="font-medium">联系方式</span></td>
            <td rowSpan={2} className={head}>Remark<br />备注</td>
            <td rowSpan={3} className="border-b border-r border-b-[#9b9b9b] border-r-black p-0 font-bold">OT<br />小时</td>
            <td rowSpan={3} className="border-b border-r border-b-[#9b9b9b] border-r-black p-0 font-bold">AL<br />天数</td>
            {days.map(day => (
              <td
                key={day.col}
                className={`border-b border-r border-black p-0 font-['Lato',sans-serif] text-[9px] font-bold ${
                  day.holiday ? 'bg-[#ff0000]' : day.weekday[0] === 'S' ? 'bg-[#c65911]' : ''
                }`}
              >
                {day.weekday}
              </td>
            ))}
            <td colSpan={2} />
          </tr>
          <tr className="h-[38px]">
            <RowHead n={4} />
            {days.map(day => (
              <td key={day.col} className={`whitespace-nowrap border-b border-r border-black p-0 text-[9px] font-bold ${day.holiday ? 'bg-[#ff0000]' : ''}`}>
                {day.date}
              </td>
            ))}
            <td colSpan={2} />
          </tr>
          <tr className="h-[34px]">
            <RowHead n={5} />
            <td colSpan={4} className="border-b border-r border-b-[#9b9b9b] border-r-black p-0 font-bold">KWEAP-HI Rooms Forecast</td>
            <td className="border-b border-r border-b-[#9b9b9b] border-r-black p-0" />
            {forecast.map((value, i) => (
              <td key={i} className="relative border-b border-r border-b-[#9b9b9b] border-r-black p-0 text-[9px] font-bold">
                {forecastFlags.includes(i) && <Corner kind="error" />}
                {value}
              </td>
            ))}
            <td className="border-b border-r border-b-[#9b9b9b] border-r-[#d4d4d4]" />
            <td className="border-b border-b-[#9b9b9b]" />
          </tr>
          {manager.map(staff => <StaffRow key={staff.row} staff={staff} />)}
          <SectionRow n={7} title="GSM (KWEAP)" beforeSelection />
          {gsm.map(staff => <StaffRow key={staff.row} staff={staff} />)}
          <SectionRow n={12} title="Front Desk (KWEAP）" />
          {frontDesk.map(staff => <StaffRow key={staff.row} staff={staff} />)}
          <SectionRow n={20} height="h-[30px]" />
          <tr className="h-12">
            <RowHead />
            <td colSpan={38} className="border-r border-black bg-[#a9d08e] p-0 pl-[2px] text-left align-top font-bold">
              <p className="whitespace-pre font-['Lato','Noto_Sans_CJK_SC',sans-serif] text-[12px] leading-4 text-[#ff0000]">Shift Remark （ KWEAP):</p>
              <div className="flex whitespace-nowrap pt-[1px]">
                {shiftCodes.map(code => <span key={code} className="w-[155px]">{code}</span>)}
              </div>
            </td>
            <td colSpan={2} />
          </tr>
        </tbody>
      </table>
      {/* freeze pane line */}
      <div className="absolute bottom-0 left-[558px] top-0 w-px bg-[#9b9b9b]" />
    </div>
  )
}

function VerticalScroll() {
  return (
    <div className="flex w-[22px] flex-col px-[4px] pb-[2px] pt-[2px]">
      <button aria-label="向上滚动" className="flex h-[15px] w-[14px] items-center justify-center border border-[#ababab] bg-white">
        <i className="border-x-[3px] border-b-[4px] border-x-transparent border-b-[#666666]" />
      </button>
      <div className="mt-[1px] flex w-[14px] flex-1 flex-col bg-[#dadada]">
        <div className="h-[82%] border border-[#ababab] bg-white" />
      </div>
      <button aria-label="向下滚动" className="flex h-[15px] w-[14px] items-center justify-center border border-[#ababab] bg-white">
        <i className="border-x-[3px] border-t-[4px] border-x-transparent border-t-[#666666]" />
      </button>
    </div>
  )
}

function SheetTabs() {
  return (
    <div className="flex h-[27px] shrink-0 items-start">
      <button aria-label="上一个工作表" className="ml-[27px] mt-[9px] h-0 border-y-[4px] border-r-[5px] border-y-transparent border-r-[#bbbbbb]" />
      <button aria-label="下一个工作表" className="ml-[24px] mt-[9px] h-0 border-y-[4px] border-l-[5px] border-y-transparent border-l-[#bbbbbb]" />
      <button className="ml-[39px] h-6 w-[46px] border-b-2 border-r border-b-[#217346] border-r-[#ababab] bg-white text-[14px] leading-5 text-[#217346]">1月</button>
      <button className="mt-[3px] h-5 w-[44px] border-r border-[#9b9b9b] pb-[2px] text-[14px] leading-[18px] text-[#444444]">2月</button>
      <button aria-label="新工作表" className="ml-[33px] mt-[5px]">
        <svg className="h-[17px] w-[17px]" viewBox="0 0 17 17" fill="none" stroke="#777">
          <circle cx="8.500" cy="8.500" r="7.800" />
          <path d="M8.500 4.500v8M4.500 8.500h8" strokeWidth="2" />
        </svg>
      </button>
      <div className="ml-auto mr-[21px] mt-[6px] flex h-[15px] items-center">
        <svg className="mr-[15px] h-3 w-1" viewBox="0 0 4 12" fill="#aaa"><path d="M1 1h2v2H1zM1 5h2v2H1zM1 9h2v2H1z" /></svg>
        <button aria-label="向左滚动" className="flex h-[15px] w-[15px] items-center justify-center border border-[#ababab] bg-white">
          <i className="border-y-[4px] border-r-[4px] border-y-transparent border-r-[#666666]" />
        </button>
        <div className="ml-[1px] mr-[2px] h-[15px] w-[697px] bg-[#dadada]">
          <div className="h-full w-[94%] border border-[#ababab] bg-white" />
        </div>
        <button aria-label="向右滚动" className="flex h-[15px] w-[15px] items-center justify-center border border-[#ababab] bg-white">
          <i className="border-y-[4px] border-l-[4px] border-y-transparent border-l-[#666666]" />
        </button>
      </div>
    </div>
  )
}

function StatusBar() {
  return (
    <div className="flex h-[23px] shrink-0 items-center border-b border-t border-b-[#a3bcb1] border-t-[#c6c6c6] bg-[#f3f3f3] pl-[7px] pr-2">
      <span className="mr-auto">就绪</span>
      <button aria-label="普通" className="flex h-full w-[38px] items-center justify-center bg-[#c6c6c6]">
        <svg className="h-[13px] w-[13px]" viewBox="0 0 13 13" fill="none" stroke="#666"><path d="M.5.5h12v12H.5zM4.500 0v13M8.500 0v13M0 4.500h13M0 8.500h13" /></svg>
      </button>
      <button aria-label="页面布局" className="flex h-full w-[38px] items-center justify-center">
        <svg className="h-[13px] w-[14px]" viewBox="0 0 14 13" fill="none" stroke="#666"><path d="M.5.5h13v12H.5zM3.500 2.500h7v8h-7zM5 4.500h4M5 6.500h4M5 8.500h4" /></svg>
      </button>
      <button aria-label="分页预览" className="flex h-full w-[38px] items-center justify-center">
        <svg className="h-[13px] w-[14px]" viewBox="0 0 14 13" fill="none" stroke="#666"><path d="M.5.5h13v12H.5zM.5 7.500h8V.5M4.500.5v7" /></svg>
      </button>
      <button aria-label="缩小" className="ml-[5px] h-[2px] w-[6px] bg-[#555555]" />
      <input
        type="range"
        aria-label="显示比例"
        min={10}
        max={190}
        defaultValue={80}
        className="mx-[4px] h-4 w-[100px] appearance-none bg-transparent bg-[linear-gradient(#aaaaaa,#aaaaaa)] bg-[length:100%_1px] bg-center bg-no-repeat [&::-webkit-slider-thumb]:h-[11px] [&::-webkit-slider-thumb]:w-[5px] [&::-webkit-slider-thumb]:appearance-none [&::-webkit-slider-thumb]:bg-[#666666]"
      />
      <button aria-label="放大">
        <svg className="h-[8px] w-[8px]" viewBox="0 0 8 8" stroke="#555" strokeWidth="2"><path d="M4 0v8M0 4h8" /></svg>
      </button>
      <span className="ml-[10px]">80%</span>
    </div>
  )
}

/* ---------- taskbar ---------- */

function TaskIcon({ name, state, children }: { name: string; state?: 'open' | 'active'; children: ReactNode }) {
  return (
    <button aria-label={name} className="relative flex h-[47px] w-11 items-center justify-center">
      {state === 'active' && <span className="absolute inset-y-1 left-[4px] right-[2px] rounded border border-white/60 bg-white/30" />}
      {state === 'active' && <span className="absolute inset-y-1 left-[4px] right-[6px] rounded bg-white/50" />}
      <svg className="relative h-6 w-6" viewBox="0 0 24 24">{children}</svg>
      {state === 'open' && <span className="absolute bottom-[5px] h-[3px] w-[6px] rounded-full bg-[#7c928a]" />}
      {state === 'active' && <span className="absolute bottom-[5px] h-[3px] w-4 rounded-full bg-[#0078d4]" />}
    </button>
  )
}

function Taskbar() {
  return (
    <footer className="grid h-[47px] shrink-0 grid-cols-[1fr_auto_1fr] items-center bg-[#c8ecdf] text-[#1f1f1f]">
      <button className="flex items-center gap-[6px] justify-self-start pb-[2px] pl-[18px] text-left">
        <svg className="h-[22px] w-[26px]" viewBox="0 0 26 22">
          <circle cx="18" cy="7" r="6.500" fill="#f59a23" />
          <path d="M6 21a5.500 5.500 0 0 1-.5-11C7 3 16 3 18 9c5-.5 7 3 7 6s-2 6-5 6z" fill="#8fb4ee" />
          <path d="M6 21c-3 0-5-2-5-4.500S4 12 7 13c2-3 7-3 9 0 5-1 9 1 9 4s-3 4-5 4z" fill="#cfe0fb" />
        </svg>
        <span className="leading-4">14°C<br /><span className="text-[#4d5f58]">多云</span></span>
      </button>

      <div className="flex items-center pl-[2px]">
        <TaskIcon name="开始">
          <defs>
            <linearGradient id="win" x1="0" y1="0" x2="1" y2="1">
              <stop offset="0" stopColor="#4cc8f5" />
              <stop offset="1" stopColor="#0a6fd0" />
            </linearGradient>
          </defs>
          <path d="M.5.5h11v11H.5zM12.500.5h11v11h-11zM.5 12.500h11v11H.5zM12.500 12.500h11v11h-11z" fill="url(#win)" />
        </TaskIcon>
        <label className="mx-[3px] flex h-[31px] w-[218px] items-center rounded-full border border-[#b4d3c7] bg-[#eef8f4] pl-[10px] pr-1">
          <svg className="h-4 w-4 shrink-0" viewBox="0 0 16 16" fill="none" stroke="#222" strokeWidth="1.700">
            <circle cx="6.800" cy="6.800" r="5.600" />
            <path d="m10.800 11 4 4.200" />
          </svg>
          <input type="search" aria-label="搜索" placeholder="搜索" className="ml-[9px] w-20 flex-1 text-[14px] outline-none placeholder:text-[#555555]" />
          <svg className="h-[26px] w-11 shrink-0" viewBox="0 0 44 26">
            <path d="M6 22C4 17 3 10 1 4M4 15l-3-2M4 12l3-3M5 19l4-4" stroke="#7c8f70" strokeWidth="1.500" fill="none" />
            <path d="M37 22c2-5 2-11 5-16M39 14l4-1M38 12l-2-4M38 18l4 0" stroke="#b5c26a" strokeWidth="1.500" fill="none" />
            <circle cx="21" cy="13" r="12" fill="#c9cfce" />
            <circle cx="21" cy="13" r="10.500" fill="#b5441a" />
            <path d="M13 8h5v4h-5zM22 5h5v4h-5zM25 13h5v4h-5zM15 16h5v4h-5z" fill="#f3902c" />
            <path d="M18 11h5v4h-5zM20 18h4v4h-4zM25 10h4v2h-4z" fill="#6a2413" />
            <path d="M17 5h3v2h-3zM12 13h3v2h-3zM22 15h3v2h-3z" fill="#7fae3d" />
          </svg>
        </label>
        <TaskIcon name="任务视图">
          <path d="M0 9h17v14H0z" fill="#252525" />
          <path d="M6 1h18v15H6z" fill="#f7f7f7" />
          <path d="M6 8h11v8H6z" fill="#bdbdbd" />
        </TaskIcon>
        <TaskIcon name="文件资源管理器" state="open">
          <path d="M0 3c0-1 .5-2 2-2h6l3 3h12v6H0z" fill="#dfa11b" />
          <path d="M0 6l9 0 2-2h11c1 0 2 1 2 2v15c0 1-1 2-2 2H2c-1 0-2-1-2-2z" fill="#ffcf48" />
          <path d="M4 23v-4c0-2 1-3 3-3h10c2 0 3 1 3 3v4z" fill="#1f7fd4" />
          <path d="M7 19h10v1.500H7z" fill="#155a9c" />
        </TaskIcon>
        <TaskIcon name="Edge" state="open">
          <circle cx="12" cy="12" r="12" fill="#1272c4" />
          <path d="M1 9C3 2 9 0 13 0c7 0 11 5 11 10 0 4-3 6-6 6-2 0-4-1-3-2 3-4-1-8-5-8C6 6 3 7 1 9" fill="#41c9b5" />
          <path d="M13 0c7 0 11 5 11 10 0 4-3 6-6 6-2 0-4-1-3-2 2-3 0-6-2-7z" fill="#6bd35f" opacity=".7" />
          <path d="M9 13c-1 5 4 9 9 8 2 0 4-2 5-3-2 1-7 2-10 0-2-1-2-4-1-6-1-1-3-1-3 1" fill="#dff3ee" />
          <path d="M9 12c-2 6 2 11 8 11-9 3-15-3-13-10 1-2 3-3 5-1" fill="#0c4f9e" />
        </TaskIcon>
        <TaskIcon name="Microsoft Store">
          <path d="M7 6V2c0-1 .5-1.500 1.500-1.500h7c1 0 1.500.5 1.500 1.500v4" fill="none" stroke="#36b6ea" strokeWidth="2" />
          <path d="M0 5h24v16c0 2-1 3-3 3H3c-2 0-3-1-3-3z" fill="#19508f" />
          <path d="M7 10h4.500v4H7z" fill="#f25022" />
          <path d="M12.500 10H17v4h-4.500z" fill="#7fba00" />
          <path d="M7 15h4.500v4H7z" fill="#00a4ef" />
          <path d="M12.500 15H17v4h-4.500z" fill="#ffb900" />
        </TaskIcon>
        <TaskIcon name="计算器" state="open">
          <path d="M3 0h18v24H3z" fill="#6f7b84" />
          <path d="M5 2h14v4H5z" fill="#4fd0f3" />
          <path d="M5 8h4v4H5zM10 8h4v4h-4zM15 8h4v4h-4zM5 13h4v4H5zM10 13h4v4h-4zM5 18h4v4H5zM10 18h4v4h-4z" fill="#d9e0e4" />
          <path d="M15 13h4v9h-4z" fill="#14508f" />
        </TaskIcon>
        <TaskIcon name="微信" state="open">
          <path d="M9 2c5 0 9 3 9 7.500S14 17 9 17c-1 0-2 0-3-.5L2 19l1-4c-2-1-3-3-3-5.500C0 5 4 2 9 2" fill="#22c95e" />
          <circle cx="6" cy="7.500" r="1.200" fill="#136b34" />
          <circle cx="12" cy="7.500" r="1.200" fill="#136b34" />
          <path d="M17 9c4 0 7 3 7 6.500 0 2-1 3.500-2 4.500v2l-2-1c-5 1.500-10-1-10-5.500C10 12 13 9 17 9" fill="#ececec" />
          <circle cx="14.500" cy="14" r="1" fill="#888" />
          <circle cx="19.500" cy="14" r="1" fill="#888" />
        </TaskIcon>
        <TaskIcon name="Chrome" state="open">
          <circle cx="12" cy="12" r="12" fill="#fbc116" />
          <path d="M12 0a12 12 0 0 1 10.400 6H12L6.800 15 1.600 6A12 12 0 0 1 12 0" fill="#e33b2e" />
          <path d="M1.600 6A12 12 0 0 0 12 24l5.200-9H6.800z" fill="#2c9f48" />
          <circle cx="12" cy="12" r="6" fill="#fff" />
          <circle cx="12" cy="12" r="4.600" fill="#3b78e7" />
        </TaskIcon>
        <TaskIcon name="收银" state="open">
          <rect width="24" height="24" rx="2" fill="#2f5df5" />
          <path d="m7 3 5 6 5-6M12 9v12M6 10.500h12M6 15.500h12" stroke="#e3edff" strokeWidth="2.400" fill="none" />
        </TaskIcon>
        <TaskIcon name="Excel" state="active">
          <path d="M13 3h10v17H13z" fill="#fff" stroke="#217346" strokeWidth="1.200" />
          <path d="M14 7h8M14 10h8M14 13h8M14 16h8M18.500 4v15" stroke="#217346" strokeWidth="1.400" />
          <path d="M1 3l13-3v24L1 21z" fill="#1b6b40" />
          <path d="m5 8 5 8M10 8l-5 8" stroke="#fff" strokeWidth="1.900" />
        </TaskIcon>
      </div>

      <div className="flex items-center justify-end pb-[2px] pr-4">
        <button aria-label="显示隐藏的图标">
          <svg className="h-[7px] w-3" viewBox="0 0 12 7" fill="none" stroke="#222" strokeWidth="1.500"><path d="m1 6 5-5 5 5" /></svg>
        </button>
        <button aria-label="更新" className="ml-[18px]">
          <svg className="h-4 w-4" viewBox="0 0 16 16" fill="none" stroke="#222" strokeWidth="1.300">
            <path d="M1 9c0-8 9-10 13-5M14.500 0v4.500H10M6 15.500V11M2 15.500V11.500h4M2.500 12l3 3.500" />
            <circle cx="12" cy="12" r="4" fill="#0078d4" stroke="none" />
          </svg>
        </button>
        <button className="ml-[17px] text-[15px]">中</button>
        <button className="ml-[23px] text-[15px]">拼</button>
        <button aria-label="网络" className="ml-[22px]">
          <svg className="h-4 w-4" viewBox="0 0 16 16" fill="none" stroke="#222" strokeWidth="1.300">
            <path d="M9 1.500H1v10h12V9M4 15h7M7.500 12v3M11 1h4v4h-4zM13 5v5" />
          </svg>
        </button>
        <button aria-label="音量" className="ml-[8px]">
          <svg className="h-[14px] w-4" viewBox="0 0 16 14" fill="none" stroke="#222" strokeWidth="1.200">
            <path d="M.6 5v4h2.500L7 12V2L3.100 5zM9 4.500c1.200 1.500 1.200 3.500 0 5M11 3c2 2.500 2 5.500 0 8M13 1.500c3 3.500 3 7.500 0 11" />
          </svg>
        </button>
        <span className="ml-[17px] text-right leading-4">16:06<br />2025/12/15</span>
      </div>
    </footer>
  )
}

export default function App() {
  return (
    <div className="flex h-screen min-w-0 flex-col overflow-hidden bg-[#e6e6e6] font-['Open_Sans','Noto_Sans_CJK_SC',sans-serif] text-[12px] leading-4 text-[#262626]">
      <TitleBar />
      <Ribbon />
      <FormulaBar />
      <main className="flex min-h-0 flex-1">
        <Sheet />
        <VerticalScroll />
      </main>
      <SheetTabs />
      <StatusBar />
      <Taskbar />
    </div>
  )
}
